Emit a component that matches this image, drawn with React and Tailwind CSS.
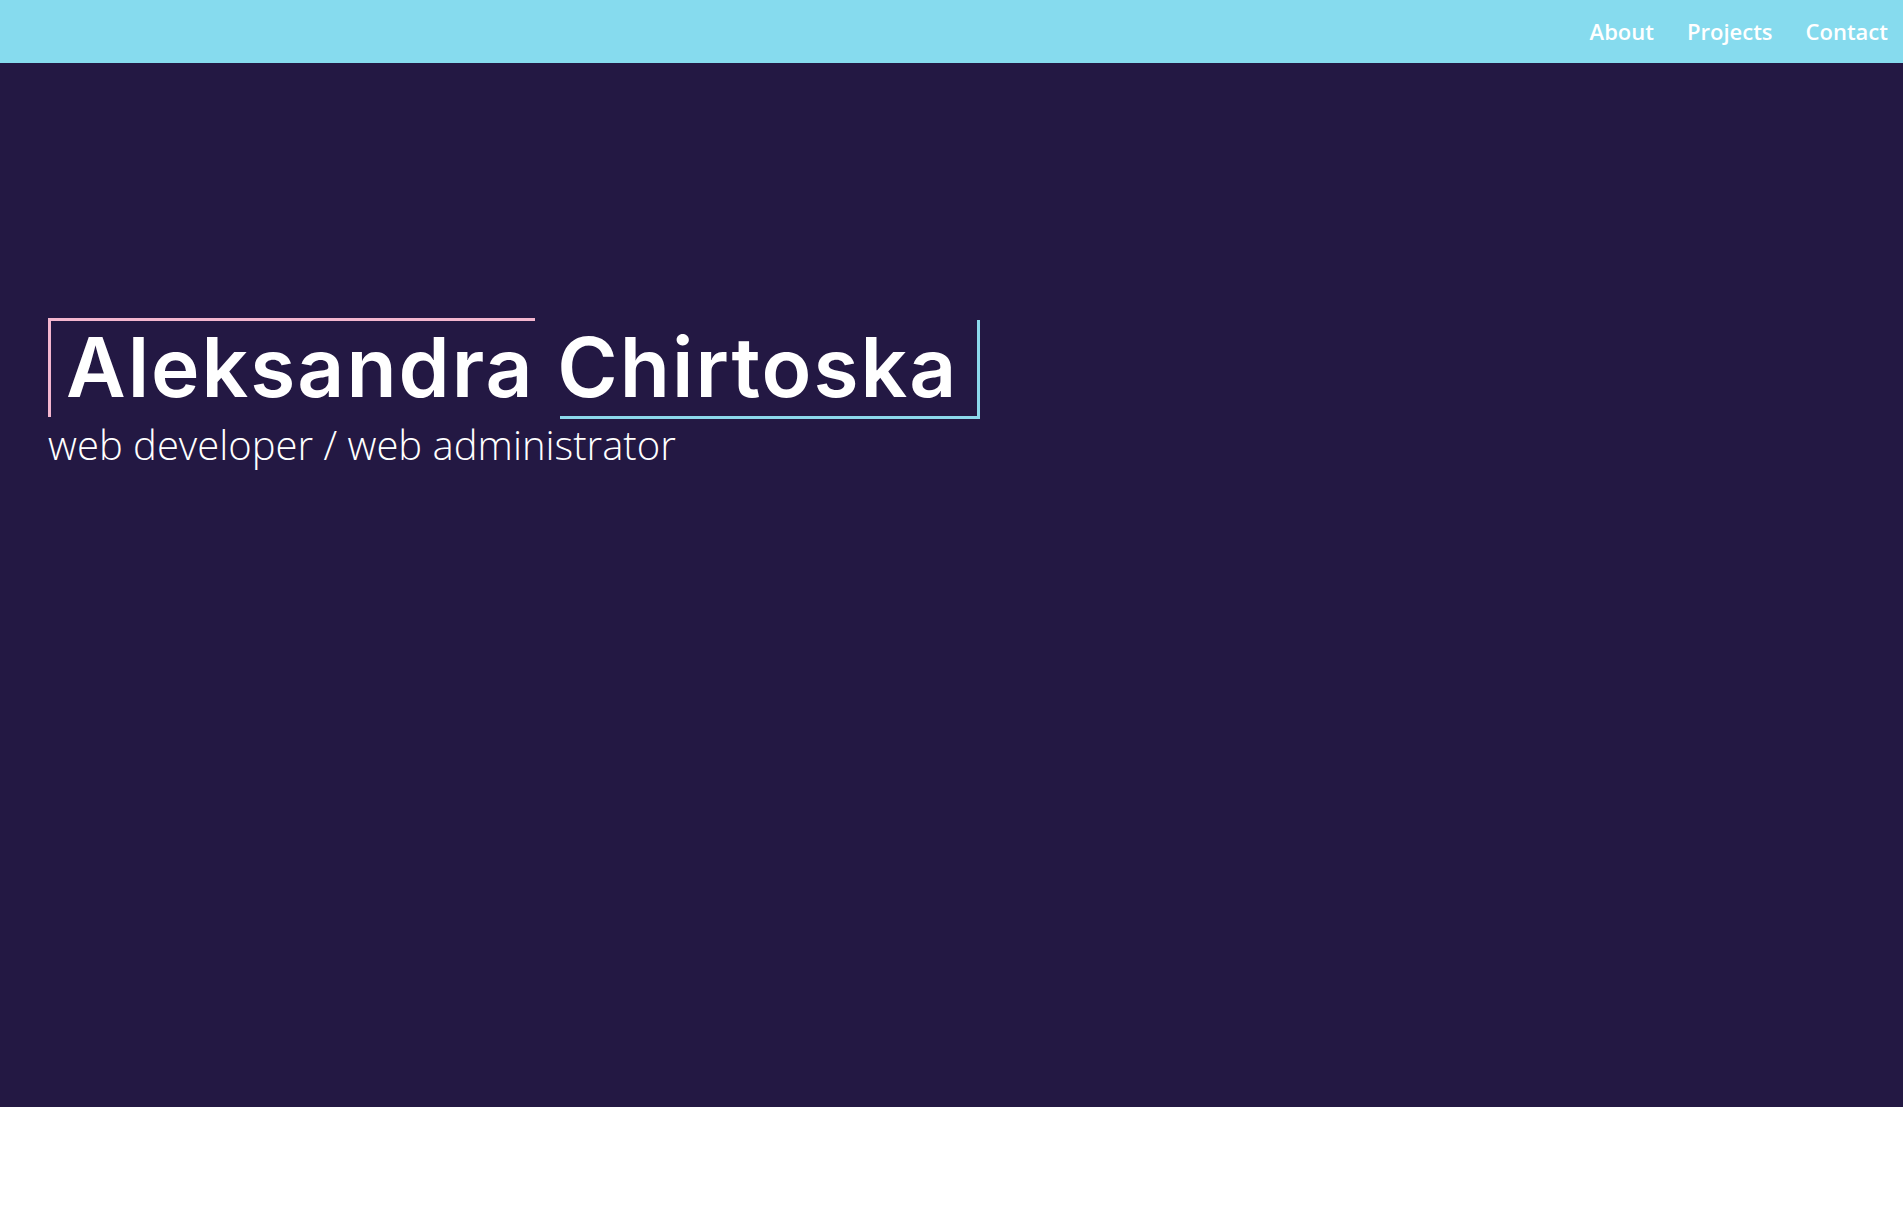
export default function App() {
  return (
    <div className="min-h-[1214px] bg-white" style={{ fontFamily: '"Open Sans", sans-serif' }}>
      <nav className="h-[63px] bg-[#86dbee] flex items-center justify-end pr-[15px] pb-[2px] gap-[33px]">
        <a className="text-white text-[22px] font-semibold leading-none" href="#">About</a>
        <a className="text-white text-[22px] font-semibold leading-none" href="#">Projects</a>
        <a className="text-white text-[22px] font-semibold leading-none" href="#">Contact</a>
      </nav>
      <section className="h-[1044px] bg-[#231843] pl-[48px] pt-[255px]">
        <div className="relative inline-block pl-[18px] pr-[22px] pt-[9px] pb-[10px]">
          <span className="absolute left-0 top-0 h-[99px] w-[3px] bg-[#f4b6cf]"></span>
          <span className="absolute left-0 top-0 h-[3px] w-[487px] bg-[#f4b6cf]"></span>
          <span className="absolute right-0 bottom-0 h-[99px] w-[3px] bg-[#8cd8ec]"></span>
          <span className="absolute right-0 bottom-0 h-[3px] w-[420px] bg-[#8cd8ec]"></span>
          <h1
            className="text-white text-[82px] font-semibold leading-[82px] tracking-[2px]"
            style={{ fontFamily: 'Inter, sans-serif' }}
          >
            Aleksandra Chirtoska
          </h1>
        </div>
        <p className="text-white text-[40px] font-light leading-[48px] mt-[2px]">
          web developer / web administrator
        </p>
      </section>
    </div>
  );
}
